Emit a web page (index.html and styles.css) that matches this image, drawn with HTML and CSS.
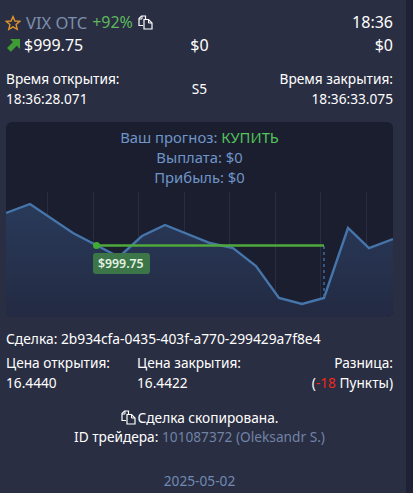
FILE: index.html
```html
<!DOCTYPE html>
<html lang="ru">
<head>
  <meta charset="UTF-8">
  <meta name="viewport" content="width=device-width, initial-scale=1.0">
  <title>Сделка</title>
  <link rel="stylesheet" href="styles.css">
</head>
<body>
  <main class="panel">
    <div class="row head-row">
      <div class="asset">
        <svg class="star" width="16" height="16" viewBox="0 0 16 16"><path d="M8 1.600l1.900 4.400 4.800.4-3.600 3.200 1.100 4.700L8 11.800l-4.200 2.500 1.100-4.700-3.600-3.200 4.800-.4z" fill="none" stroke="#e0932c" stroke-width="1.400"/></svg>
        <span class="asset-name">VIX OTC</span>
        <span class="green">+92%</span>
        <svg class="copy" width="15" height="15" viewBox="0 0 15 15"><path d="M5 10.500H1V3.500L3.500 1H7.500V4.500" fill="none" stroke="#fff" stroke-width="1.200"/><path d="M1 4H4V1" fill="none" stroke="#fff" stroke-width="1"/><path d="M6 4.500h4.500L14 8v6H6z" fill="none" stroke="#fff" stroke-width="1.200"/><path d="M10.500 4.500V8H14" fill="none" stroke="#fff" stroke-width="1"/></svg>
      </div>
      <span>18:36</span>
    </div>
    <div class="row amount-row">
      <div class="price">
        <svg width="13" height="13" viewBox="0 0 13 13"><path d="M3 0h10v10l-3.200-3.200-6 6L0 9l6-6z" fill="#3f9c35"/></svg>
        <span>$999.75</span>
      </div>
      <span class="mid">$0</span>
      <span class="end">$0</span>
    </div>
    <div class="row times">
      <div>Время открытия:<br>18:36:28.071</div>
      <div class="mid">S5</div>
      <div class="end">Время закрытия:<br>18:36:33.075</div>
    </div>

    <section class="chart">
      <div class="forecast">
        <div>Ваш прогноз: <span class="buy">КУПИТЬ</span></div>
        <div>Выплата: $0</div>
        <div>Прибыль: $0</div>
      </div>
      <svg class="plot" width="387" height="195" viewBox="0 0 387 195">
        <defs>
          <linearGradient id="fillGrad" x1="0" y1="0" x2="0" y2="1">
            <stop offset="0" stop-color="#293a5a"/>
            <stop offset="1" stop-color="#232a42"/>
          </linearGradient>
        </defs>
        <g stroke="#282d42" stroke-width="1">
          <path d="M41.500 70V195M87.500 70V195M132.500 70V195M178.500 70V195M223.500 70V195M269.500 70V195M314.500 70V195M360.500 70V195"/>
        </g>
        <path d="M0 91L24 82 67 111 90 123 113 135 136 114 159 103 204 121 227 126 250 144 273 176 296 182 318 176 342 106 363 126 387 117V195H0Z" fill="url(#fillGrad)"/>
        <path d="M0 91L24 82 67 111 90 123 113 135 136 114 159 103 204 121 227 126 250 144 273 176 296 182 318 176 342 106 363 126 387 117" fill="none" stroke="#4575aa" stroke-width="2.400"/>
        <path d="M318 124V176" stroke="#3f6595" stroke-width="1.600" stroke-dasharray="3 3"/>
        <path d="M90 123.500H318" stroke="#4fa83d" stroke-width="2.400"/>
        <circle cx="90.500" cy="123.500" r="3.500" fill="#41ac34"/>
      </svg>
      <div class="price-tag">$999.75</div>
    </section>

    <div class="deal-id">Сделка: 2b934cfa-0435-403f-a770-299429a7f8e4</div>
    <div class="prices">
      <div>Цена открытия:<br>16.4440</div>
      <div>Цена закрытия:<br>16.4422</div>
      <div class="end">Разница:<br>(<span class="red">-18</span> Пункты)</div>
    </div>
    <div class="copied">
      <div class="copied-line">
        <svg class="copy" width="15" height="15" viewBox="0 0 15 15"><path d="M5 10.500H1V3.500L3.500 1H7.500V4.500" fill="none" stroke="#fff" stroke-width="1.200"/><path d="M1 4H4V1" fill="none" stroke="#fff" stroke-width="1"/><path d="M6 4.500h4.500L14 8v6H6z" fill="none" stroke="#fff" stroke-width="1.200"/><path d="M10.500 4.500V8H14" fill="none" stroke="#fff" stroke-width="1"/></svg>
        <span>Сделка скопирована.</span>
      </div>
      <div>ID трейдера: <span class="trader">101087372 (Oleksandr S.)</span></div>
    </div>
    <div class="date">2025-05-02</div>
  </main>
</body>
</html>
```

FILE: styles.css
```css
html, body {
  margin: 0;
  height: 100%;
}

body {
  background-color: #1f2234;
  font-family: "Noto Sans", sans-serif;
  color: #fff;
  overflow: hidden;
}

.panel {
  box-sizing: border-box;
  width: 406px;
  height: 493px;
  padding: 11px 13px 0 6px;
  background-color: #2a2e42;
  font-size: 13.700px;
  line-height: 20px;
}

.row {
  display: grid;
  grid-template-columns: 1fr 1fr 1fr;
  align-items: center;
}

.head-row {
  display: flex;
  justify-content: space-between;
  font-size: 16px;
  line-height: 23px;
}

.asset {
  display: flex;
  align-items: center;
  gap: 5px;
}

.star {
  margin-left: -1px;
}

.asset-name {
  font-size: 16.500px;
  color: #7c8fae;
}

.green {
  color: #5cb85c;
}

.buy {
  color: #52c45a;
}

.amount-row {
  font-size: 16px;
  line-height: 23px;
}

.price {
  display: flex;
  align-items: center;
  gap: 4px;
  padding-left: 1px;
}

.mid {
  text-align: center;
}

.end {
  text-align: right;
}

.times {
  margin-top: 12px;
}

.chart {
  position: relative;
  height: 195px;
  margin-top: 13px;
  background-color: #1b1e2f;
  border-radius: 6px;
  overflow: hidden;
}

.forecast {
  padding-top: 5px;
  font-size: 14.800px;
  line-height: 20px;
  text-align: center;
  color: #6f95c8;
}

.plot {
  position: absolute;
  left: 0;
  top: 0;
}

.price-tag {
  position: absolute;
  left: 87px;
  top: 131px;
  padding: 0 6px 0 5px;
  background-color: #3c7548;
  border-radius: 3px;
  font-size: 12.300px;
  font-weight: 600;
  line-height: 21px;
  color: #e4f2e4;
}

.deal-id {
  margin-top: 12px;
  font-size: 13.800px;
}

.prices {
  display: grid;
  grid-template-columns: 131px 1fr auto;
  margin-top: 4px;
}

.red {
  color: #f0281e;
}

.copied {
  margin-top: 15px;
  text-align: center;
  line-height: 19px;
}

.copied-line {
  display: flex;
  justify-content: center;
  align-items: center;
  gap: 2px;
}

.trader {
  color: #7083a6;
}

.date {
  margin-top: 25px;
  text-align: center;
  color: #6f8ab4;
}
```
